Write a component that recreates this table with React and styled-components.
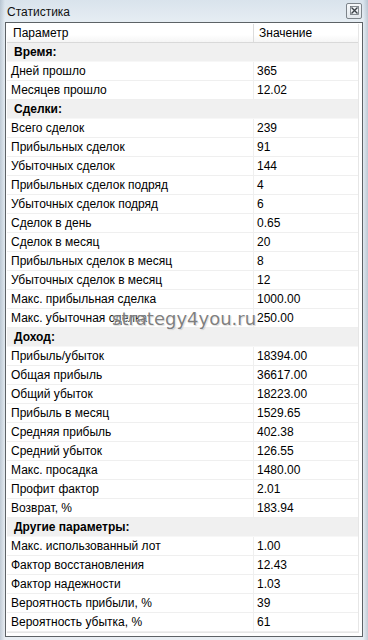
import React from "react";
import styled, { createGlobalStyle } from "styled-components";

const Global = createGlobalStyle`
  html, body { margin: 0; padding: 0; }
  body { width: 368px; height: 640px; overflow: hidden; }
`;

const Window = styled.div`
  position: relative;
  width: 368px;
  height: 640px;
  display: flex;
  flex-direction: column;
  overflow: hidden;
  font-family: "Liberation Sans", Arial, sans-serif;
  background:
    linear-gradient(90deg, rgba(120,140,160,0.35) 0px, rgba(255,255,255,0) 5px, rgba(255,255,255,0) 363px, rgba(120,140,160,0.35) 368px),
    linear-gradient(180deg, #d9e3ec 0px, #e6edf3 22px, #dfe7ee 300px, #e9eef3 640px);
`;

const TitleBar = styled.div`
  height: 22px;
  flex: none;
  display: flex;
  align-items: center;
  justify-content: space-between;
  padding: 0 6px 0 7px;
  box-sizing: border-box;
`;

const Title = styled.span`
  font-size: 12px;
  color: #111;
  margin-top: 1px;
`;

const CloseButton = styled.div`
  width: 16px;
  height: 16px;
  box-sizing: border-box;
  border: 1px solid #7d848a;
  border-radius: 2px;
  background: linear-gradient(#f7f9fb, #e3e8ed);
  display: flex;
  align-items: center;
  justify-content: center;
  margin-top: -1px;
`;

const Panel = styled.div`
  margin: 0 5px;
  border: 1px solid #5d6266;
  background: #fff;
  padding: 1px 3px 3px 1px;
  flex: none;
`;

const Table = styled.div`
  border-right: 1px solid #e6e6e6;
  border-bottom: 1px solid #e6e6e6;
`;

const Row = styled.div`
  display: grid;
  grid-template-columns: 246px 1fr;
  height: 19px;
  box-sizing: border-box;
  font-size: 12px;
  color: #000;
  align-items: center;
`;

const HeaderRow = styled(Row)`
  background: linear-gradient(#ffffff 0%, #ffffff 60%, #f5f5f5 100%);
  border-bottom: 1px solid #d9d9d9;
`;

const HeaderCell = styled.div`
  height: 100%;
  display: flex;
  align-items: center;
  padding-left: ${(p) => (p.$first ? "6px" : "5px")};
  border-left: ${(p) => (p.$first ? "none" : "1px solid #dcdcdc")};
  box-sizing: border-box;
`;

const SectionRow = styled(Row)`
  display: flex;
  background: #f0f0f0;
  font-weight: bold;
  padding-left: 7px;
  border-bottom: 1px solid #f7f7f7;
`;

const DataRow = styled(Row)`
  border-bottom: 1px solid #efefef;
`;

const Cell = styled.div`
  height: 100%;
  display: flex;
  align-items: center;
  box-sizing: border-box;
  padding-left: ${(p) => (p.$value ? "3px" : "4px")};
  border-left: ${(p) => (p.$value ? "1px solid #efefef" : "none")};
  white-space: nowrap;
`;

const Watermark = styled.div`
  position: absolute;
  left: 112px;
  top: 308px;
  font-family: "DejaVu Sans", Verdana, sans-serif;
  font-size: 18px;
  color: rgba(105, 105, 105, 0.85);
  text-shadow: 0 0 2px rgba(255, 255, 255, 1), 0 0 4px rgba(255, 255, 255, 0.8), 1px 1px 1px rgba(0, 0, 0, 0.2);
  pointer-events: none;
`;

const data = [
  {
    title: "Время:",
    rows: [
      ["Дней прошло", "365"],
      ["Месяцев прошло", "12.02"],
    ],
  },
  {
    title: "Сделки:",
    rows: [
      ["Всего сделок", "239"],
      ["Прибыльных сделок", "91"],
      ["Убыточных сделок", "144"],
      ["Прибыльных сделок подряд", "4"],
      ["Убыточных сделок подряд", "6"],
      ["Сделок в день", "0.65"],
      ["Сделок в месяц", "20"],
      ["Прибыльных сделок в месяц", "8"],
      ["Убыточных сделок в месяц", "12"],
      ["Макс. прибыльная сделка", "1000.00"],
      ["Макс. убыточная сделка", "250.00"],
    ],
  },
  {
    title: "Доход:",
    rows: [
      ["Прибыль/убыток", "18394.00"],
      ["Общая прибыль", "36617.00"],
      ["Общий убыток", "18223.00"],
      ["Прибыль в месяц", "1529.65"],
      ["Средняя прибыль", "402.38"],
      ["Средний убыток", "126.55"],
      ["Макс. просадка", "1480.00"],
      ["Профит фактор", "2.01"],
      ["Возврат, %", "183.94"],
    ],
  },
  {
    title: "Другие параметры:",
    rows: [
      ["Макс. использованный лот", "1.00"],
      ["Фактор восстановления", "12.43"],
      ["Фактор надежности", "1.03"],
      ["Вероятность прибыли, %", "39"],
      ["Вероятность убытка, %", "61"],
    ],
  },
];

export default function App() {
  return (
    <>
      <Global />
      <Window>
        <TitleBar>
          <Title>Статистика</Title>
          <CloseButton>
            <svg width="9" height="9" viewBox="0 0 9 9">
              <path d="M1.5 1.5 L7.5 7.5 M7.5 1.5 L1.5 7.5" stroke="#3c4248" strokeWidth="1.4" />
              <rect x="0.5" y="0.5" width="8" height="8" fill="none" stroke="#6b7278" strokeWidth="0.8" />
            </svg>
          </CloseButton>
        </TitleBar>
        <Panel>
          <Table>
            <HeaderRow>
              <HeaderCell $first>Параметр</HeaderCell>
              <HeaderCell>Значение</HeaderCell>
            </HeaderRow>
            {data.map((sec) => (
              <React.Fragment key={sec.title}>
                <SectionRow>{sec.title}</SectionRow>
                {sec.rows.map(([k, v]) => (
                  <DataRow key={k}>
                    <Cell>{k}</Cell>
                    <Cell $value>{v}</Cell>
                  </DataRow>
                ))}
              </React.Fragment>
            ))}
          </Table>
        </Panel>
        <Watermark>strategy4you.ru</Watermark>
      </Window>
    </>
  );
}
